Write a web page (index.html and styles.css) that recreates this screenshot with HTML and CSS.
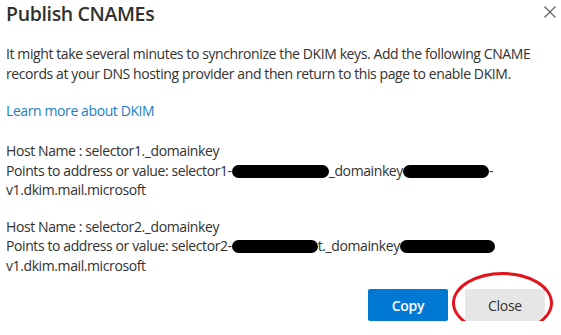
FILE: index.html
```html
<!DOCTYPE html>
<html lang="en">
<head>
    <meta charset="UTF-8">
    <title>Publish CNAMEs</title>
    <link rel="stylesheet" href="styles.css">
</head>
<body>
    <div class="dialog">
        <div class="dialog-header">
            <h1 class="title">Publish CNAMEs</h1>
            <button class="close-x" aria-label="Close">
                <svg width="12" height="12" viewBox="0 0 12 12">
                    <path d="M0.5 0.5 L11.5 11.5 M11.5 0.5 L0.5 11.5" stroke="#605e5c" stroke-width="1.1" fill="none"/>
                </svg>
            </button>
        </div>
        <p class="intro">It might take several minutes to synchronize the DKIM keys. Add the following CNAME records at your DNS hosting provider and then return to this page to enable DKIM.</p>
        <a href="#" class="learn-link">Learn more about DKIM</a>

        <p class="record">
            Host Name : selector1._domainkey<br>
            Points to address or value: selector1-<span class="redact" style="width: 97px"></span>_domainkey<span class="redact" style="width: 86px"></span>-<br>
            v1.dkim.mail.microsoft
        </p>
        <p class="record">
            Host Name : selector2._domainkey<br>
            Points to address or value: selector2-<span class="redact" style="width: 86px"></span>t._domainkey<span class="redact" style="width: 95px"></span><br>
            v1.dkim.mail.microsoft
        </p>

        <div class="actions">
            <button class="btn btn-primary">Copy</button>
            <div class="marked">
                <button class="btn btn-default">Close</button>
                <span class="circle"></span>
            </div>
        </div>
    </div>
</body>
</html>
```

FILE: styles.css
```css
body {
    margin: 0;
    background-color: #ffffff;
    font-family: "Open Sans", "Noto Sans", Arial, sans-serif;
    color: #323130;
}

.dialog {
    padding: 0 16px 0 6px;
}

.dialog-header {
    display: flex;
    justify-content: space-between;
    align-items: center;
    height: 28px;
}

.title {
    margin: 0;
    font-size: 19.5px;
    font-weight: 600;
    line-height: 28px;
    letter-spacing: -0.35px;
}

.close-x {
    background: none;
    border: none;
    padding: 0;
    margin-right: -11px;
    margin-top: -2px;
    cursor: pointer;
}

.intro {
    margin: 16px 0 17px;
    font-size: 14px;
    line-height: 20px;
    letter-spacing: -0.4px;
}

.learn-link {
    display: block;
    font-size: 14px;
    line-height: 20px;
    letter-spacing: -0.4px;
    color: #1a7fc8;
    text-decoration: none;
}

.record {
    margin: 20px 0 0;
    font-size: 14px;
    line-height: 19.5px;
    letter-spacing: -0.4px;
}

.record + .record {
    margin-top: 17px;
}

.redact {
    display: inline-block;
    height: 13px;
    background-color: #000;
    border-radius: 7px;
    vertical-align: -2px;
}

.actions {
    display: flex;
    justify-content: flex-end;
    gap: 17px;
    margin-top: 14px;
}

.btn {
    width: 80px;
    height: 32px;
    border: none;
    border-radius: 2px;
    font-family: "Open Sans", "Noto Sans", Arial, sans-serif;
    font-size: 14px;
    letter-spacing: -0.3px;
    cursor: pointer;
}

.btn-primary {
    background-color: #0078d4;
    color: #ffffff;
    font-weight: 600;
}

.btn-default {
    background-color: #e6e6e6;
    color: #323130;
}

.marked {
    position: relative;
}

.circle {
    position: absolute;
    left: -13px;
    top: -17px;
    width: 95px;
    height: 56px;
    border: 3px solid #e3131b;
    border-radius: 50%;
    pointer-events: none;
}
```
